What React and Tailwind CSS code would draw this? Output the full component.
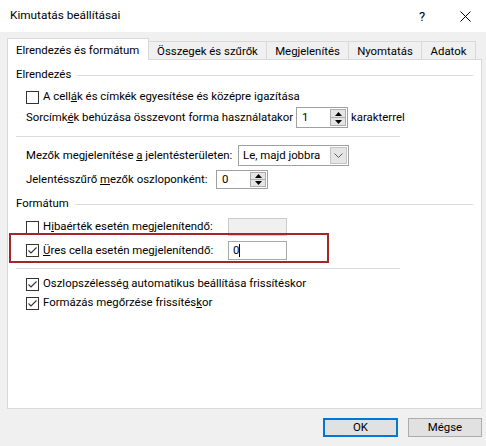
import React from 'react';

const CheckBox = ({ checked }) => (
  <span className="w-[13px] h-[13px] border border-[#333333] bg-white flex items-center justify-center shrink-0">
    {checked && (
      <svg width="11" height="11" viewBox="0 0 11 11">
        <path d="M1.5 5.5 L4 8 L9.5 2.5" fill="none" stroke="#333333" strokeWidth="1.1" />
      </svg>
    )}
  </span>
);

const SpinButtons = () => (
  <span className="flex flex-col w-[16px] h-full border border-[#adadad] bg-[#e5e5e5]">
    <span className="flex-1 flex items-center justify-center border-b border-[#adadad]">
      <svg width="7" height="4" viewBox="0 0 7 4"><path d="M0 4 L3.5 0 L7 4Z" fill="#000" /></svg>
    </span>
    <span className="flex-1 flex items-center justify-center">
      <svg width="7" height="4" viewBox="0 0 7 4"><path d="M0 0 L3.5 4 L7 0Z" fill="#000" /></svg>
    </span>
  </span>
);

const Spinner = ({ value, h }) => (
  <span className={`flex items-stretch w-[52px] ${h} border border-[#a0a0a0] bg-white p-px shrink-0`}>
    <span className="flex-1 flex items-center pl-[4px]">{value}</span>
    <SpinButtons />
  </span>
);

const Header = ({ children }) => (
  <div className="flex items-center h-[18px]">
    <span>{children}</span>
    <span className="flex-1 h-px bg-[#dcdcdc] ml-[6px]" />
  </div>
);

const tabs = [
  { label: 'Összegek és szűrők', w: 'w-[118px]' },
  { label: 'Megjelenítés', w: 'w-[82px]' },
  { label: 'Nyomtatás', w: 'w-[73px]' },
  { label: 'Adatok', w: 'w-[54px]' },
];

export default function App() {
  return (
    <div className="w-[486px] h-[446px] bg-[#f0f0f0] relative overflow-hidden text-[11.4px] text-black font-['Roboto',sans-serif] leading-none whitespace-nowrap">
      {/* title bar */}
      <div className="h-[32px] bg-white flex items-center">
        <span className="flex-1 pl-[10px] text-[11.8px]">Kimutatás beállításai</span>
        <span className="w-[44px] text-center text-[13px]">?</span>
        <span className="w-[42px] flex justify-center">
          <svg width="11" height="11" viewBox="0 0 11 11">
            <path d="M0.5 0.5 L10.5 10.5 M10.5 0.5 L0.5 10.5" stroke="#000" strokeWidth="1" />
          </svg>
        </span>
      </div>

      {/* tabs */}
      <div className="mt-[6px] ml-[7px] flex items-end h-[21px]">
        <div className="relative z-10 -mb-px h-[22px] w-[142px] bg-white border-l border-t border-r border-[#d9d9d9] flex items-center pl-[8px] pt-[2px]">
          Elrendezés és formátum
        </div>
        {tabs.map((t) => (
          <div
            key={t.label}
            className={`h-[18px] ${t.w} border-t border-r border-[#d9d9d9] flex items-center justify-center pt-[3px]`}
          >
            {t.label}
          </div>
        ))}
      </div>

      {/* panel */}
      <div className="ml-[7px] w-[475px] h-[350px] border border-[#d9d9d9] bg-white px-[8px]">
        <div className="mt-[6px]">
          <Header>Elrendezés</Header>
        </div>
        <div className="mt-[4px] h-[18px] flex items-center pl-[10px] gap-[4px]">
          <CheckBox />
          <span>A cell<u>á</u>k és címkék egyesítése és középre igazítása</span>
        </div>
        <div className="mt-px h-[21px] flex items-center pl-[10px]">
          <span className="w-[270px]">Sorcímk<u>é</u>k behúzása összevont forma használatakor</span>
          <Spinner value="1" h="h-[21px]" />
          <span className="ml-[3px]">karakterrel</span>
        </div>
        <div className="mt-[8px] h-px w-[384px] bg-[#dcdcdc]" />
        <div className="mt-[8px] h-[21px] flex items-center pl-[10px]">
          <span className="w-[212px]">Mezők megjelenítése <u>a</u> jelentésterületen:</span>
          <span className="flex items-stretch w-[111px] h-[21px] border border-[#a0a0a0] bg-white shrink-0">
            <span className="flex-1 flex items-center pl-[4px]">Le, majd jobbra</span>
            <span className="w-[17px] m-px bg-[#e5e5e5] border border-[#c4c4c4] flex items-center justify-center">
              <svg width="9" height="5" viewBox="0 0 9 5">
                <path d="M0.5 0.5 L4.5 4.5 L8.5 0.5" fill="none" stroke="#606060" strokeWidth="1" />
              </svg>
            </span>
          </span>
        </div>
        <div className="mt-[4px] h-[19px] flex items-center pl-[10px]">
          <span className="w-[190px]">Jelentésszűrő <u>m</u>ezők oszloponként:</span>
          <Spinner value="0" h="h-[19px]" />
        </div>
        <div className="mt-[6px]">
          <Header>Formátum</Header>
        </div>
        <div className="mt-[5px] h-[18px] flex items-center pl-[10px]">
          <CheckBox />
          <span className="ml-[4px] w-[185px]">H<u>i</u>baérték esetén megjelenítendő:</span>
          <span className="w-[59px] h-[18px] border border-[#cccccc] bg-[#f0f0f0] shrink-0" />
        </div>
        <div className="mt-[5px] h-[19px] flex items-center pl-[10px]">
          <CheckBox checked />
          <span className="ml-[4px] w-[185px]"><u>Ü</u>res cella esetén megjelenítendő:</span>
          <span className="w-[59px] h-[19px] border border-[#a8a8a8] bg-white flex items-center pl-[4px] shrink-0">
            0<span className="w-px h-[13px] bg-black" />
          </span>
        </div>
        <div className="mt-[8px] h-px w-[384px] bg-[#dcdcdc]" />
        <div className="mt-[6px] h-[18px] flex items-center pl-[10px] gap-[4px]">
          <CheckBox checked />
          <span>Oszlopszélessé<u>g</u> automatikus beállítása frissítéskor</span>
        </div>
        <div className="mt-px h-[18px] flex items-center pl-[10px] gap-[4px]">
          <CheckBox checked />
          <span>Formázás megőrzése frissítés<u>k</u>or</span>
        </div>
      </div>

      {/* buttons */}
      <div className="mt-[9px] flex justify-end pr-[4px] gap-[10px]">
        <button className="w-[75px] h-[19px] bg-[#e1e1e1] border-2 border-[#0078d7] flex items-center justify-center">OK</button>
        <button className="w-[74px] h-[19px] bg-[#e1e1e1] border border-[#adadad] flex items-center justify-center">Mégse</button>
      </div>

      {/* highlight annotation */}
      <div className="absolute left-[9px] top-[233px] w-[320px] h-[30px] border-2 border-[#a3262a]" />
    </div>
  );
}
